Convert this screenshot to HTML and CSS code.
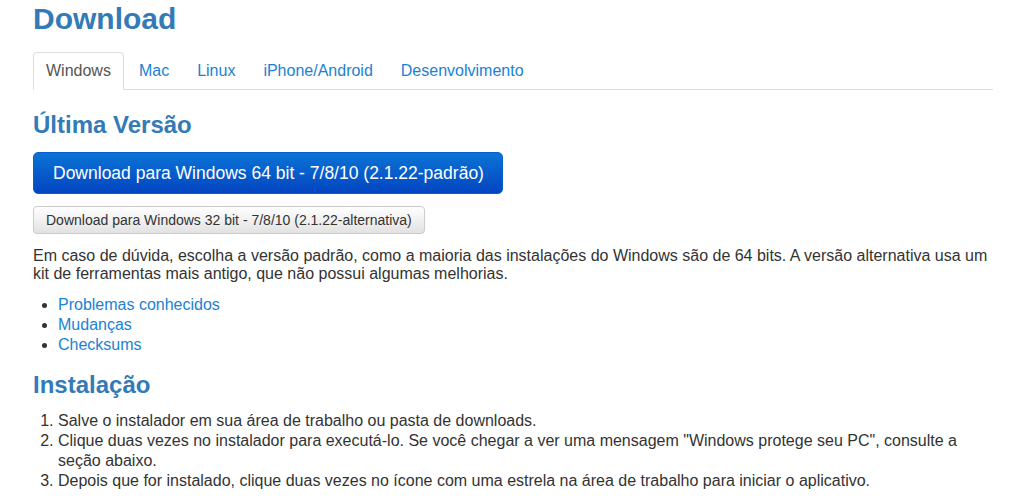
FILE: index.html
```html
<!DOCTYPE html>
<html lang="pt-BR">
<head>
    <meta charset="UTF-8">
    <title>Download</title>
    <link rel="stylesheet" href="styles.css">
</head>
<body>

<div class="container">
    <h1>Download</h1>

    <ul class="nav-tabs">
        <li class="active"><a href="#">Windows</a></li>
        <li><a href="#">Mac</a></li>
        <li><a href="#">Linux</a></li>
        <li><a href="#">iPhone/Android</a></li>
        <li><a href="#">Desenvolvimento</a></li>
    </ul>

    <h2 class="first">Última Versão</h2>

    <a class="btn btn-primary" href="#">Download para Windows 64 bit - 7/8/10 (2.1.22-padrão)</a>
    <a class="btn btn-default" href="#">Download para Windows 32 bit - 7/8/10 (2.1.22-alternativa)</a>

    <p>Em caso de dúvida, escolha a versão padrão, como a maioria das instalações do Windows são de 64 bits. A versão alternativa usa um kit de ferramentas mais antigo, que não possui algumas melhorias.</p>

    <ul class="links">
        <li><a href="#">Problemas conhecidos</a></li>
        <li><a href="#">Mudanças</a></li>
        <li><a href="#">Checksums</a></li>
    </ul>

    <h2>Instalação</h2>

    <ol class="steps">
        <li>Salve o instalador em sua área de trabalho ou pasta de downloads.</li>
        <li>Clique duas vezes no instalador para executá-lo. Se você chegar a ver uma mensagem "Windows protege seu PC", consulte a seção abaixo.</li>
        <li>Depois que for instalado, clique duas vezes no ícone com uma estrela na área de trabalho para iniciar o aplicativo.</li>
    </ol>
</div>

</body>
</html>
```

FILE: styles.css
```css
body {
    font-family: "Liberation Sans", Arial, sans-serif;
    font-size: 16px;
    line-height: 20px;
    color: #333;
    background: #fff;
    margin: 0;
}

a {
    color: #1a82d4;
    text-decoration: none;
}

.container {
    width: 960px;
    padding: 1px 0 0 33px;
}

h1 {
    font-size: 30px;
    line-height: 36px;
    color: #337ab7;
    margin: 0 0 15px;
}

h2 {
    font-size: 24px;
    line-height: 30px;
    color: #337ab7;
    margin: 15px 0 11px;
}

h2.first {
    margin: 20px 0 12px;
}

.nav-tabs {
    display: flex;
    list-style: none;
    margin: 0;
    padding: 0;
    border-bottom: 1px solid #ddd;
}

.nav-tabs li {
    margin: 0 2px -1px 0;
}

.nav-tabs a {
    display: block;
    padding: 8px 12px;
    border: 1px solid transparent;
    border-radius: 4px 4px 0 0;
}

.nav-tabs .active a {
    color: #555;
    background: #fff;
    border-color: #ddd #ddd transparent;
}

.btn {
    display: table;
    border-radius: 5px;
    border: 1px solid transparent;
}

.btn-primary {
    font-size: 17.5px;
    line-height: 24px;
    padding: 8px 18px 8px 19px;
    color: #fff;
    background: linear-gradient(to bottom, #0b74d5, #0345c1);
    border-color: #0a5fc8;
    margin-bottom: 12px;
}

.btn-default {
    font-size: 14px;
    line-height: 18px;
    padding: 4px 12px;
    color: #333;
    background: linear-gradient(to bottom, #fff, #e2e2e2);
    border-color: #ccc;
    border-radius: 4px;
    margin-bottom: 13px;
}

p {
    line-height: 18px;
    margin: 0 0 12px;
}

.links,
.steps {
    margin: 0;
    padding-left: 25px;
}
```
